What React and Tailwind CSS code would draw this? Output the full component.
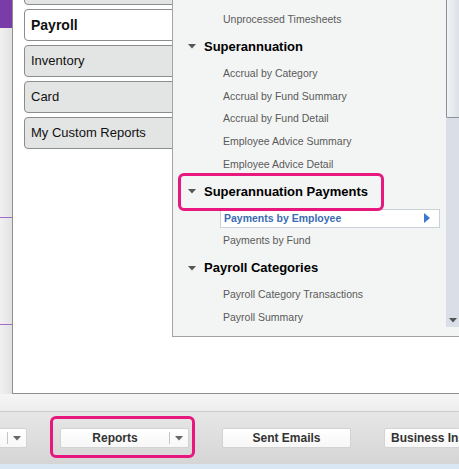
const FONT = { fontFamily: '"Liberation Sans", Arial, sans-serif' };

function DownTri({ className = '' }) {
  return (
    <svg className={className} width="8" height="5" viewBox="0 0 8 5">
      <path d="M0 0 L8 0 L4 4.5 Z" fill="currentColor" />
    </svg>
  );
}

function LeftButton({ label, active, className = '' }) {
  return (
    <div
      className={`h-[32px] w-[200px] shrink-0 rounded-[4px] border border-[#8c8c8c] flex items-center pl-[6px] text-[#111] ${
        active ? 'bg-white font-bold text-[14px]' : 'bg-[#e3e4e4] text-[13px]'
      } ${className}`}
    >
      {label}
    </div>
  );
}

function Item({ label }) {
  return (
    <div className="h-[22.75px] flex items-center pl-[50px] text-[10.5px] text-[#5a5a5a]">{label}</div>
  );
}

function Header({ label, children }) {
  return (
    <div className="relative h-[31px] flex items-center pl-[15px] text-[13px] font-bold text-black">
      <DownTri className="text-[#555] mr-[8px]" />
      {label}
      {children}
    </div>
  );
}

function ToolButton({ label, split, left, className = '' }) {
  return (
    <div
      className={`relative h-[20px] w-[129px] shrink-0 rounded-[2px] border border-[#d3d3d3] bg-gradient-to-b from-white to-[#f7f7f7] flex items-center text-[12px] font-bold text-[#333] ${className}`}
    >
      <span className={left ? 'flex-1 pl-[6px] whitespace-nowrap' : 'flex-1 text-center'}>{label}</span>
      {split && (
        <div className="flex items-center h-full">
          <div className="w-px h-[12px] bg-[#c4c4c4]" />
          <DownTri className="text-[#666] mx-[5px]" />
        </div>
      )}
    </div>
  );
}

export default function App() {
  return (
    <div className="w-[459px] h-[469px] overflow-hidden bg-[#f2f2f2] flex flex-col" style={FONT}>
      <div className="flex h-[394px] shrink-0">
        {/* background app strip */}
        <div className="w-[12px] shrink-0 flex flex-col bg-gradient-to-r from-[#f1f1f1] to-[#e2e2e2]">
          <div className="h-[28px] bg-[#7a3da8]" />
          <div className="h-[189px]" />
          <div className="h-px bg-[#9d6cc8]" />
          <div className="h-[106px]" />
          <div className="h-px bg-[#9d6cc8]" />
        </div>

        {/* dialog */}
        <div className="flex-1 flex bg-white border-l border-b border-[#8f8f8f] overflow-hidden">
          <div className="w-[159px] shrink-0 pl-[11px] overflow-hidden flex flex-col gap-[4px] -mt-[27px]">
            <LeftButton label="" />
            <LeftButton label="Payroll" active />
            <LeftButton label="Inventory" />
            <LeftButton label="Card" />
            <LeftButton label="My Custom Reports" />
          </div>

          <div className="flex-1 h-[337px] flex bg-[#f3f5f4] border-l border-b border-[#a3a3a3]">
            <div className="flex-1 pt-[8.5px]">
              <Item label="Unprocessed Timesheets" />
              <Header label="Superannuation" />
              <Item label="Accrual by Category" />
              <Item label="Accrual by Fund Summary" />
              <Item label="Accrual by Fund Detail" />
              <Item label="Employee Advice Summary" />
              <Item label="Employee Advice Detail" />
              <Header label="Superannuation Payments">
                <div className="absolute left-[5px] -top-[3px] w-[206px] h-[38px] rounded-[6px] border-[3px] border-[#e8177d] z-10" />
              </Header>
              <div className="h-[22.75px] flex items-center pl-[47px] pr-[6px]">
                <div className="flex-1 h-[19px] bg-white border border-[#c9d0d8] flex items-center pl-[3px] pr-[9px] text-[10.5px] font-bold text-[#3a6cb4]">
                  <span className="flex-1">Payments by Employee</span>
                  <svg width="6" height="10" viewBox="0 0 6 10">
                    <path d="M0 0 L6 5 L0 10 Z" fill="#3b78d0" />
                  </svg>
                </div>
              </div>
              <Item label="Payments by Fund" />
              <Header label="Payroll Categories" />
              <Item label="Payroll Category Transactions" />
              <Item label="Payroll Summary" />
            </div>

            {/* scrollbar */}
            <div className="w-[13px] shrink-0 h-[327px] flex flex-col bg-[#dadfe7]">
              <div className="h-[118px] border-l border-b border-[#8b9099] rounded-bl-[2px] bg-gradient-to-r from-[#f0f2f4] to-[#dde1e7]" />
              <div className="flex-1" />
              <div className="h-[14px] flex items-center justify-center">
                <DownTri className="text-[#555]" />
              </div>
            </div>
          </div>
        </div>
      </div>

      <div className="h-[18px] shrink-0 bg-gradient-to-b from-[#f6f6f6] to-[#ededed] border-b border-[#cbcbcb]" />

      {/* toolbar */}
      <div className="h-[52px] shrink-0 flex items-center gap-[33px] bg-gradient-to-b from-[#e7e7e7] to-[#d5d5d5] overflow-hidden">
        <ToolButton label="" split className="-ml-[102px]" />
        <div className="relative">
          <ToolButton label="Reports" split />
          <div className="absolute -left-[10px] -right-[6px] -top-[12px] -bottom-[10px] rounded-[6px] border-[3px] border-[#e8177d]" />
        </div>
        <ToolButton label="Sent Emails" />
        <ToolButton label="Business Insights" left />
      </div>
      <div className="flex-1 bg-[#d9e6f3]" />
    </div>
  );
}
